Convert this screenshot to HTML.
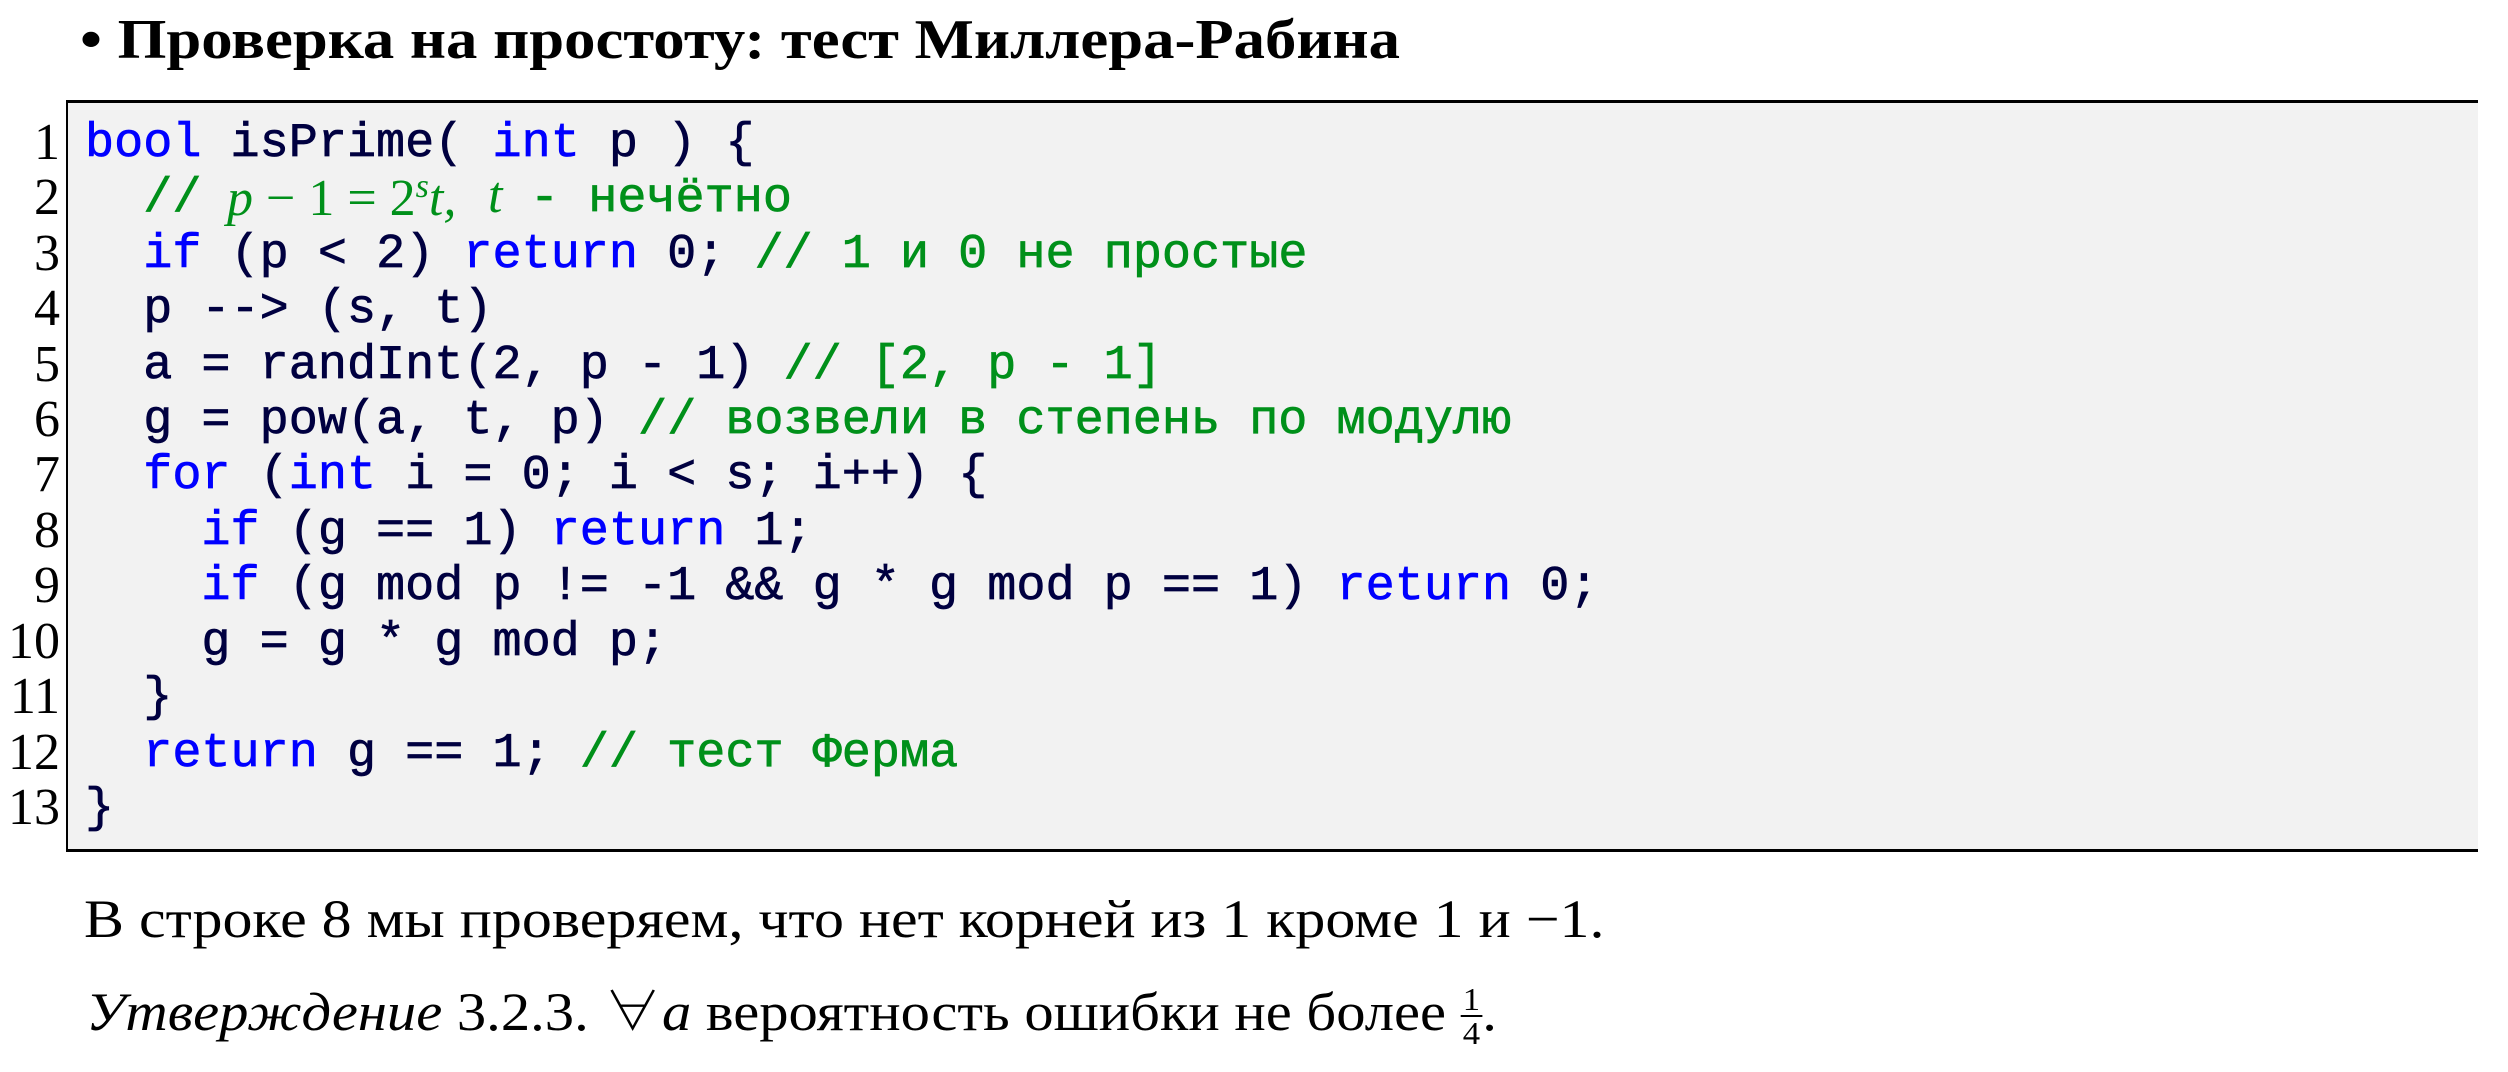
<!DOCTYPE html>
<html><head><meta charset="utf-8"><style>
html,body{margin:0;padding:0;background:#fff;width:2508px;height:1072px;overflow:hidden;position:relative}
.t{position:absolute;font-family:"Liberation Serif","Noto Serif CJK SC",serif;color:#000;white-space:pre;line-height:1;transform-origin:0 0}
.box{position:absolute;left:66px;top:100px;width:2412px;height:752px;background:#f2f2f2;border-top:3px solid #000;border-bottom:3px solid #000;border-left:2px solid #000;box-sizing:border-box}
.ln{position:absolute;right:2448px;font-family:"Liberation Serif",serif;font-size:52px;line-height:1;color:#000}
.c{position:absolute;left:85px;font-family:"Liberation Mono","Noto Sans CJK SC",monospace;font-size:48.5px;font-weight:normal;line-height:1;white-space:pre;color:#000040;-webkit-text-stroke:0.7px currentColor}
.k{color:#0000ff}.g{color:#00901a}
.m{font-family:"Liberation Serif",serif;font-style:italic;font-weight:normal;font-size:52px}
.mn{font-family:"Liberation Serif",serif;font-weight:normal;font-size:52px}
</style></head><body>
<div class="t" style="left:80px;top:12px;font-size:56px;font-weight:bold;transform:scaleX(1.12)">• Проверка на простоту: тест Миллера-Рабина</div>
<div class="box"></div>
<div class="ln" style="top:117px">1</div>
<div class="ln" style="top:172px">2</div>
<div class="ln" style="top:228px">3</div>
<div class="ln" style="top:283px">4</div>
<div class="ln" style="top:339px">5</div>
<div class="ln" style="top:394px">6</div>
<div class="ln" style="top:449px">7</div>
<div class="ln" style="top:505px">8</div>
<div class="ln" style="top:560px">9</div>
<div class="ln" style="top:616px">10</div>
<div class="ln" style="top:671px">11</div>
<div class="ln" style="top:727px">12</div>
<div class="ln" style="top:782px">13</div>
<div class="c" style="top:120px"><span class="k">bool</span> isPrime( <span class="k">int</span> p ) {</div>
<div class="c g" style="top:175px">  //</div>
<div class="t g" style="left:227px;top:170px;color:#00901a"><span class="m">p</span><span class="mn"> − 1 = 2</span><sup class="m" style="font-size:34px;vertical-align:18px">s</sup><span class="m">t,</span></div>
<div class="t" style="left:488px;top:170px;color:#00901a"><span class="m">t</span></div>
<div class="c g" style="top:175px;left:530px">- нечётно</div>
<div class="c" style="top:231px">  <span class="k">if</span> (p &lt; 2) <span class="k">return</span> 0; <span class="g">// 1 и 0 не простые</span></div>
<div class="c" style="top:286px">  p --&gt; (s, t)</div>
<div class="c" style="top:342px">  a = randInt(2, p - 1) <span class="g">// [2, p - 1]</span></div>
<div class="c" style="top:397px">  g = pow(a, t, p) <span class="g">// возвели в степень по модулю</span></div>
<div class="c" style="top:452px">  <span class="k">for</span> (<span class="k">int</span> i = 0; i &lt; s; i++) {</div>
<div class="c" style="top:508px">    <span class="k">if</span> (g == 1) <span class="k">return</span> 1;</div>
<div class="c" style="top:563px">    <span class="k">if</span> (g mod p != -1 &amp;&amp; g * g mod p == 1) <span class="k">return</span> 0;</div>
<div class="c" style="top:619px">    g = g * g mod p;</div>
<div class="c" style="top:674px">  }</div>
<div class="c" style="top:730px">  <span class="k">return</span> g == 1; <span class="g">// тест Ферма</span></div>
<div class="c" style="top:785px">}</div>
<div class="t" style="left:84px;top:892px;font-size:54px;transform:scaleX(1.11)">В строке 8 мы проверяем, что нет корней из 1 кроме 1 и −1.</div>
<div class="t" style="left:86px;top:983px;font-size:54px;transform:scaleX(1.085)"><i>Утверждение</i> 3.2.3. ∀<i>a</i> вероятность ошибки не более <span style="display:inline-block;vertical-align:-14px;text-align:center;font-size:32px;line-height:1"><span style="display:block;border-bottom:2px solid #000;padding:0 2px">1</span><span style="display:block">4</span></span>.</div>
</body></html>
